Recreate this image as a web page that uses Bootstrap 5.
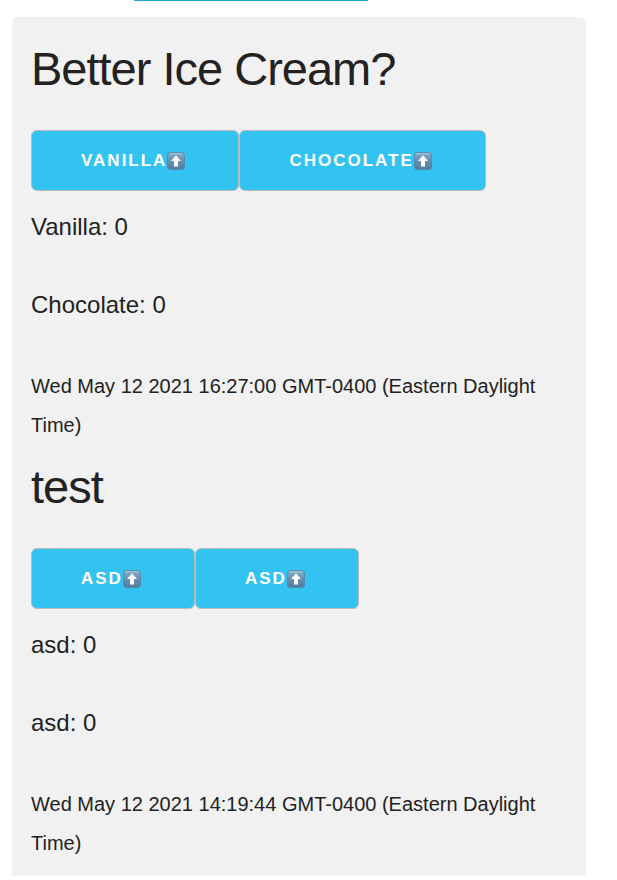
<!DOCTYPE html>
<html lang="en">
<head>
<meta charset="utf-8">
<meta name="viewport" content="width=device-width, initial-scale=1">
<title>Polls</title>
<link href="https://cdn.jsdelivr.net/npm/bootstrap@5.3.0/dist/css/bootstrap.min.css" rel="stylesheet">
<style>
  body { font-family: "Liberation Sans", Arial, sans-serif; color: #222; background: #fff; }
  .top-edge { height: 1px; width: 38%; margin-left: 134px; background: #1ba6dc; }
  .poll-panel { margin: 16px 31px 0 12px; padding: 23px 19px 13px; background: #f1f1f1; border-radius: 6px 6px 0 0; }
  .poll + .poll { margin-top: 13px; }
  .poll-title { font-size: 47px; line-height: 58px; letter-spacing: -1px; font-weight: 400; margin-bottom: 32px; }
  .vote-btn {
    --bs-btn-bg: #33c3f0; --bs-btn-color: #fff; --bs-btn-border-color: #bbb;
    --bs-btn-hover-bg: #1eaedb; --bs-btn-hover-color: #fff; --bs-btn-hover-border-color: #bbb;
    --bs-btn-padding-x: 49px; --bs-btn-padding-y: 0; --bs-btn-border-radius: 6px;
    --bs-btn-font-size: 17px; --bs-btn-font-weight: 700; --bs-btn-line-height: 59px;
    letter-spacing: 2px;
  }
  .vote-btn svg { width: 18px; height: 18px; margin-right: 4px; }
  .votes { font-size: 24px; line-height: 39px; margin-bottom: 39px; }
  .votes-first { margin-top: 16px; }
  .stamp { font-size: 20px; line-height: 39px; margin-top: 43px; }
</style>
<script src="https://cdn.jsdelivr.net/npm/bootstrap@5.3.0/dist/js/bootstrap.bundle.min.js" defer></script>
</head>
<body>
<svg class="position-absolute" width="0" height="0" aria-hidden="true">
  <defs>
    <linearGradient id="tile" x1="0" y1="0" x2="0" y2="1">
      <stop offset="0" stop-color="#8db4d0"/><stop offset=".3" stop-color="#6f9abb"/><stop offset="1" stop-color="#537b9d"/>
    </linearGradient>
  </defs>
  <symbol id="up" viewBox="0 0 18 18">
    <rect x=".5" y=".5" width="17" height="17" rx="3" fill="url(#tile)" stroke="#54839f" stroke-opacity=".8"/>
    <path d="M2.5 1.8h13" stroke="#b5d1e3" stroke-width="1" opacity=".7"/>
    <path d="M9 3.2 14 9H11V14.6H7V9H4Z" fill="#fff"/>
  </symbol>
</svg>
<div class="top-edge"></div>
<main class="poll-panel">
  <section class="poll">
    <h1 class="poll-title">Better Ice Cream?</h1>
    <div class="d-flex flex-wrap">
      <button type="button" class="btn vote-btn d-flex align-items-center text-uppercase">Vanilla<svg aria-hidden="true"><use href="#up"/></svg></button>
      <button type="button" class="btn vote-btn d-flex align-items-center text-uppercase">Chocolate<svg aria-hidden="true"><use href="#up"/></svg></button>
    </div>
    <p class="votes votes-first">Vanilla: 0</p>
    <p class="votes">Chocolate: 0</p>
    <p class="stamp mb-0">Wed May 12 2021 16:27:00 GMT-0400 (Eastern Daylight Time)</p>
  </section>
  <section class="poll">
    <h1 class="poll-title">test</h1>
    <div class="d-flex flex-wrap">
      <button type="button" class="btn vote-btn d-flex align-items-center text-uppercase">asd<svg aria-hidden="true"><use href="#up"/></svg></button>
      <button type="button" class="btn vote-btn d-flex align-items-center text-uppercase">asd<svg aria-hidden="true"><use href="#up"/></svg></button>
    </div>
    <p class="votes votes-first">asd: 0</p>
    <p class="votes">asd: 0</p>
    <p class="stamp mb-0">Wed May 12 2021 14:19:44 GMT-0400 (Eastern Daylight Time)</p>
  </section>
</main>
</body>
</html>
